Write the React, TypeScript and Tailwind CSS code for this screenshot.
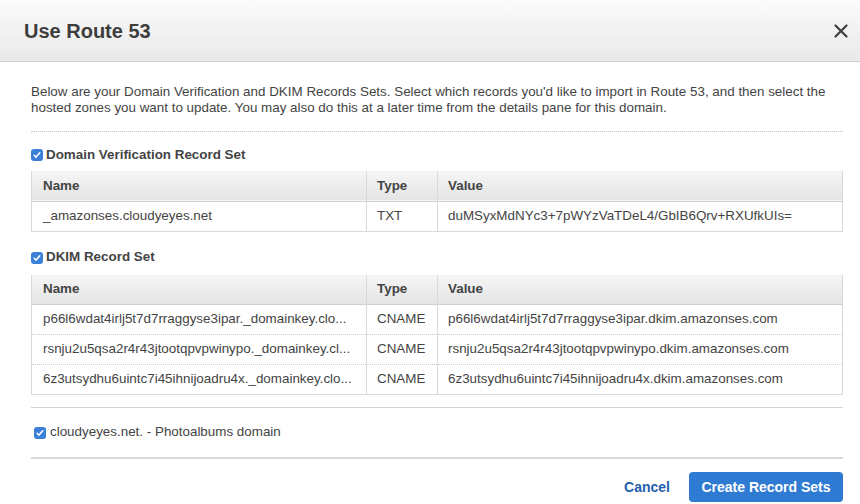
import React from 'react'

interface RecordRow {
  name: string
  type: string
  value: string
}

const verificationRows: RecordRow[] = [
  {
    name: '_amazonses.cloudyeyes.net',
    type: 'TXT',
    value: 'duMSyxMdNYc3+7pWYzVaTDeL4/GbIB6Qrv+RXUfkUIs=',
  },
]

const dkimRows: RecordRow[] = [
  {
    name: 'p66l6wdat4irlj5t7d7rraggyse3ipar._domainkey.clo...',
    type: 'CNAME',
    value: 'p66l6wdat4irlj5t7d7rraggyse3ipar.dkim.amazonses.com',
  },
  {
    name: 'rsnju2u5qsa2r4r43jtootqpvpwinypo._domainkey.cl...',
    type: 'CNAME',
    value: 'rsnju2u5qsa2r4r43jtootqpvpwinypo.dkim.amazonses.com',
  },
  {
    name: '6z3utsydhu6uintc7i45ihnijoadru4x._domainkey.clo...',
    type: 'CNAME',
    value: '6z3utsydhu6uintc7i45ihnijoadru4x.dkim.amazonses.com',
  },
]

function Check() {
  return (
    <span className="inline-flex w-[12px] h-[12px] shrink-0 items-center justify-center rounded-[3px] bg-[#3a80d8]">
      <svg viewBox="0 0 12 12" className="w-[10px] h-[10px]">
        <path d="M2.6 6.3 L4.9 8.5 L9.3 3.4" fill="none" stroke="white" strokeWidth="1.9" strokeLinecap="round" strokeLinejoin="round" />
      </svg>
    </span>
  )
}

function RecordTable({ rows }: { rows: RecordRow[] }) {
  return (
    <table className="w-full table-fixed border-collapse border-x border-b border-[#d9d9d9] text-[13.4px] text-[#444]">
      <colgroup>
        <col className="w-[335px]" />
        <col className="w-[71px]" />
        <col />
      </colgroup>
      <thead>
        <tr className="h-[30px] bg-gradient-to-b from-[#f6f6f6] to-[#e4e4e4] border-b border-[#d0d0d0]">
          <th className="text-left font-bold pl-[11px]">Name</th>
          <th className="text-left font-bold pl-[10px] border-l border-[#d9d9d9]">Type</th>
          <th className="text-left font-bold pl-[10px] border-l border-[#d9d9d9]">Value</th>
        </tr>
      </thead>
      <tbody>
        {rows.map((row, i) => (
          <tr key={i} className={`h-[30px] ${i > 0 ? 'border-t border-dotted border-[#cfcfcf]' : ''}`}>
            <td className="pl-[11px] whitespace-nowrap overflow-hidden">{row.name}</td>
            <td className="pl-[10px] border-l border-[#d9d9d9]">{row.type}</td>
            <td className="pl-[10px] border-l border-[#d9d9d9] whitespace-nowrap overflow-hidden">{row.value}</td>
          </tr>
        ))}
      </tbody>
    </table>
  )
}

export default function App() {
  return (
    <div className="w-[860px] h-[504px] bg-white overflow-hidden text-[#444] font-['Liberation_Sans',Arial,sans-serif]">
      {/* Header */}
      <div className="h-[62px] flex items-center justify-between pl-[24px] pr-[12px] bg-gradient-to-b from-[#fbfbfb] to-[#e9e9e9] border-b border-[#cfcfcf]">
        <h1 className="text-[20px] font-bold text-[#3d3d3d]">Use Route 53</h1>
        <svg viewBox="0 0 14 14" className="w-[14px] h-[14px] mt-[1px]">
          <path d="M1.5 1.5 L12.5 12.5 M12.5 1.5 L1.5 12.5" stroke="#3f3f3f" strokeWidth="2.2" strokeLinecap="round" />
        </svg>
      </div>

      {/* Body */}
      <div className="pl-[31px] pr-[17px] pt-[22px]">
        <p className="text-[13.4px] leading-[16px]">
          Below are your Domain Verification and DKIM Records Sets. Select which records you'd like to import in Route 53, and then select the hosted zones you want to update. You may also do this at a later time from the details pane for this domain.
        </p>

        <div className="mt-[15px] border-t border-dotted border-[#c6c6c6]" />

        <div className="mt-[15px] flex items-center gap-[3px] h-[16px]">
          <Check />
          <span className="text-[13.4px] font-bold">Domain Verification Record Set</span>
        </div>
        <div className="mt-[8px]">
          <RecordTable rows={verificationRows} />
        </div>

        <div className="mt-[18px] flex items-center gap-[3px] h-[16px]">
          <Check />
          <span className="text-[13.4px] font-bold">DKIM Record Set</span>
        </div>
        <div className="mt-[9px]">
          <RecordTable rows={dkimRows} />
        </div>

        <div className="mt-[12px] border-t border-[#d4d4d4]" />

        <div className="h-[49px] flex items-center gap-[4px] pl-[3px]">
          <Check />
          <span className="text-[13.4px]">cloudyeyes.net. - Photoalbums domain</span>
        </div>

        <div className="border-t-2 border-[#dadada]" />

        {/* Footer */}
        <div className="mt-[13px] flex items-center justify-end gap-[19px]">
          <button className="text-[14px] font-bold text-[#1f5ead]">Cancel</button>
          <button className="h-[30px] w-[154px] rounded-[4px] bg-[#2f7bd4] text-white text-[14px] font-bold">
            Create Record Sets
          </button>
        </div>
      </div>
    </div>
  )
}
